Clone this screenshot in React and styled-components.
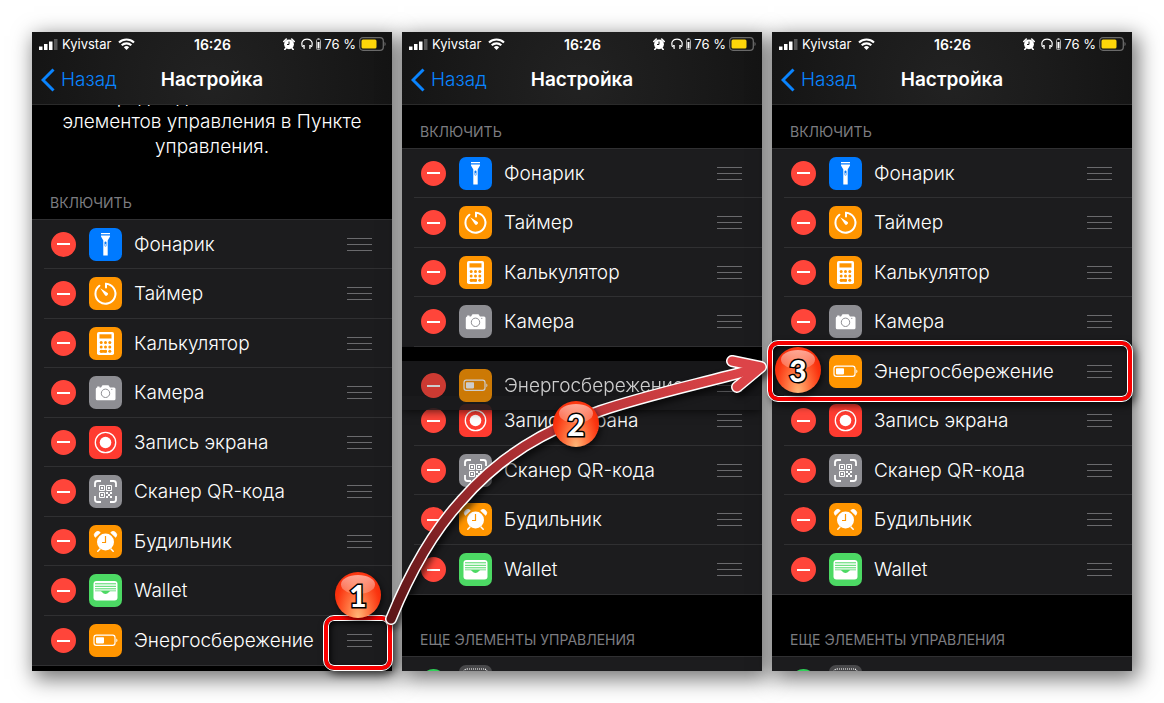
import React from "react";
import styled, { createGlobalStyle, css } from "styled-components";

const GlobalStyle = createGlobalStyle`
  * {
    box-sizing: border-box;
  }
  body {
    margin: 0;
    background: #fff;
    font-family: Inter, "Liberation Sans", sans-serif;
    overflow: hidden;
  }
  h1, h2, p, ul {
    margin: 0;
    padding: 0;
  }
  button {
    border: 0;
    padding: 0;
    background: none;
    cursor: pointer;
  }
`;

// controls that can be added to the control center
const controls = {
  torch: { label: "Фонарик", color: "#007aff" },
  timer: { label: "Таймер", color: "#ff9500" },
  calc: { label: "Калькулятор", color: "#ff9500" },
  camera: { label: "Камера", color: "#8e8e93" },
  record: { label: "Запись экрана", color: "#ff3b30" },
  qr: { label: "Сканер QR-кода", color: "#8e8e93" },
  alarm: { label: "Будильник", color: "#ff9500" },
  wallet: { label: "Wallet", color: "#4cd964" },
  power: { label: "Энергосбережение", color: "#ff9500" },
};

const before = ["torch", "timer", "calc", "camera", "record", "qr", "alarm", "wallet", "power"];
const after = ["torch", "timer", "calc", "camera", "power", "record", "qr", "alarm", "wallet"];

function Glyph({ name }) {
  switch (name) {
    case "torch":
      return (
        <>
          <path d="M12 5h9v1.3h-9zM12 7.4h9v1.2l-2.3 3.8v15h-4.4v-15L12 8.600z" fill="#fff" />
          <rect x="15.500" y="13.500" width="2" height="5" rx="1" fill="#007aff" />
          <circle cx="16.500" cy="17" r=".8" fill="#fff" />
        </>
      );
    case "timer":
      return (
        <>
          <path d="M17 10.500V6.700a10 10 0 1 1-6.600 2" fill="none" stroke="#fff" strokeWidth="2" strokeLinecap="round" />
          <path d="M11.300 11.200l6.600 4.300a1.700 1.700 0 1 1-2.300 2.300z" fill="#fff" />
        </>
      );
    case "calc":
      return (
        <>
          <rect x="8" y="5" width="17" height="23" rx="1.800" fill="#fff" />
          <rect x="10.500" y="7.300" width="12" height="4.200" fill="#ff9500" />
          <g fill="#ff9500">
            {[15.5, 20, 24.3].map((y) =>
              [12.2, 16.5, 20.8].map((x) => <circle key={x + y} cx={x} cy={y} r="1.500" />)
            )}
            <rect x="11" y="23" width="7" height="2.700" rx="1.300" />
          </g>
        </>
      );
    case "camera":
      return (
        <>
          <path
            d="M8.200 11.500v-1h2.300v1h1.500l1.500-2.300h6l1.500 2.300h4a1.500 1.500 0 0 1 1.500 1.500v9.700a1.500 1.500 0 0 1-1.500 1.500H8.300a1.500 1.500 0 0 1-1.500-1.500V13a1.500 1.500 0 0 1 1.400-1.500z"
            fill="#fff"
          />
          <circle cx="16.500" cy="17.300" r="4.200" fill="none" stroke="#8e8e93" strokeWidth="1" />
          <circle cx="22.800" cy="13.300" r=".6" fill="#8e8e93" />
        </>
      );
    case "record":
      return (
        <>
          <circle cx="16.500" cy="16.500" r="10.200" fill="none" stroke="#fff" strokeWidth="1.300" />
          <circle cx="16.500" cy="16.500" r="5.800" fill="#fff" />
        </>
      );
    case "qr":
      return (
        <g fill="none" stroke="#fff">
          <path
            d="M6 12V8.500A2.500 2.500 0 0 1 8.500 6H12M21 6h3.500A2.500 2.500 0 0 1 27 8.500V12M27 21v3.500a2.500 2.500 0 0 1-2.500 2.500H21M12 27H8.500A2.500 2.500 0 0 1 6 24.500V21"
            strokeWidth="1.800"
          />
          <path d="M10.500 10.500h5v5h-5zM17.500 10.500h5v5h-5zM10.500 17.500h5v5h-5z" />
          <path d="M12 13h2M19 13h2M12 20h2M17 18h2M21 18h2M19 20h2M17 22h2M21 22h2" strokeWidth="1.800" />
        </g>
      );
    case "alarm":
      return (
        <>
          <circle cx="16.500" cy="17" r="8.500" fill="#fff" />
          <path
            d="M6.300 12.300a3.400 3.400 0 0 1 5-4.700zM26.700 12.300a3.400 3.400 0 0 0-5-4.700z"
            fill="#fff"
            stroke="#fff"
            strokeWidth=".8"
            strokeLinejoin="round"
          />
          <path d="M11 24l-2.200 2.300M22 24l2.200 2.300" stroke="#fff" strokeWidth="1.500" strokeLinecap="round" />
          <path d="M16.500 11v6.500H13" fill="none" stroke="#ff9500" strokeWidth="1.200" />
        </>
      );
    case "wallet":
      return (
        <>
          <rect x="4.500" y="7" width="24" height="19.500" rx="3" fill="#fff" />
          <path d="M6 9.800h21M6 12.300h21M6 14.800h21" stroke="#4cd964" strokeWidth="1" />
          <path d="M6 16.500h21v.8h-5.500c-1.500 0-2 2.700-5 2.700s-3.500-2.700-5-2.700H6z" fill="#4cd964" />
        </>
      );
    case "power":
      return (
        <>
          <rect x="5" y="11.200" width="21" height="10.200" rx="2.300" fill="none" stroke="#fff" strokeWidth="1.200" />
          <rect x="7" y="13.200" width="8" height="6.200" rx=".8" fill="#fff" />
          <path d="M27.300 14.500c1.500.4 1.500 3.300 0 3.700z" fill="#fff" />
        </>
      );
    default:
      return <rect x="5" y="4" width="23" height="20" rx="3" fill="none" stroke="#fff" strokeWidth="1.200" strokeDasharray="1 1" />;
  }
}

function StatusBar() {
  return (
    <Status>
      <StatusSide>
        <svg width="20" height="12" viewBox="0 0 20 12">
          <path d="M0 8.500h3.500V12H0zM5 6h3.500v6H5zM10 3.500h3.500V12H10z" fill="#fff" />
          <path d="M15 1h3.500v11H15z" fill="#555" />
        </svg>
        <Carrier>Kyivstar</Carrier>
        <svg width="17" height="12" viewBox="0 0 17 12">
          <g fill="none" stroke="#fff" strokeWidth="2.100">
            <path d="M1 4.600a10.800 10.800 0 0 1 15 0" />
            <path d="M3.700 7.300a7 7 0 0 1 9.600 0" />
          </g>
          <path d="M8.500 12L5.800 9.200a4 4 0 0 1 5.400 0z" fill="#fff" />
        </svg>
      </StatusSide>
      <Clock>16:26</Clock>
      <StatusSide $end>
        <svg width="12" height="12" viewBox="0 0 12 12">
          <circle cx="6" cy="6.300" r="4.900" fill="#fff" />
          <path d="M.8 3.500L3.300 1M11.200 3.500L8.700 1M3 10l-1.200 1.500M9 10l1.200 1.500" stroke="#fff" strokeWidth="1.600" strokeLinecap="round" />
          <path d="M6 3.500v3H4" fill="none" stroke="#1a1a1a" />
        </svg>
        <Headphones width="12" height="12" viewBox="0 0 12 12">
          <path d="M1.600 9C-.5 4 2 1.200 6 1.200S12.500 4 10.400 9" fill="none" stroke="#fff" strokeWidth="1.200" />
          <path d="M2 7h1.700v4H2.600zM10 7H8.300v4h1.100z" fill="#fff" />
        </Headphones>
        <svg width="5" height="12" viewBox="0 0 5 12">
          <path d="M1.500 0h2v1.500h-2z" fill="#aaa" />
          <rect x=".5" y="1.500" width="4" height="10" rx=".8" fill="none" stroke="#aaa" />
          <path d="M1.500 4h2v6.500h-2z" fill="#fff" />
        </svg>
        <span>76 %</span>
        <svg width="27" height="14" viewBox="0 0 27 14">
          <rect x=".7" y=".7" width="23.600" height="12.600" rx="3.300" fill="none" stroke="#6a6a6a" strokeWidth="1.300" />
          <rect x="2.500" y="2.500" width="15" height="9" rx="1.500" fill="#ffd60a" />
          <path d="M25.500 5c1.500.4 1.500 3.600 0 4z" fill="#6a6a6a" />
        </svg>
      </StatusSide>
    </Status>
  );
}

function Control({ id, dragging }) {
  const { label, color } = controls[id];
  return (
    <Row as={dragging ? "div" : "li"} $dragging={dragging}>
      <RowBody $dimmed={dragging}>
        <RemoveButton aria-label={`Удалить ${label}`} />
        <Tile viewBox="0 0 33 33" aria-hidden="true">
          <rect width="33" height="33" rx="7" fill={color} />
          <Glyph name={id} />
        </Tile>
        <Label>{label}</Label>
        <Handle aria-label={`Переместить ${label}`}>
          <i />
          <i />
          <i />
        </Handle>
      </RowBody>
    </Row>
  );
}

function Phone({ order, intro, dragged, more }) {
  return (
    <Screen>
      <NavBar>
        <StatusBar />
        <NavRow>
          <Back href="#back">
            <svg width="14" height="24" viewBox="0 0 14 24">
              <path d="M12.500 1.500L2 12l10.500 10.500" fill="none" stroke="#0a84ff" strokeWidth="3" />
            </svg>
            Назад
          </Back>
          <Title>Настройка</Title>
        </NavRow>
      </NavBar>
      {intro && (
        <Intro>
          порядок дополнительных
          <br />
          элементов управления в Пункте
          <br />
          управления.
        </Intro>
      )}
      <SectionTitle>ВКЛЮЧИТЬ</SectionTitle>
      <List>
        {order.map((id) =>
          id === dragged ? (
            <Slot key={id}>
              <Control id={id} dragging />
            </Slot>
          ) : (
            <Control key={id} id={id} />
          )
        )}
      </List>
      {more && (
        <>
          <SectionTitle $spaced>ЕЩЕ ЭЛЕМЕНТЫ УПРАВЛЕНИЯ</SectionTitle>
          <List>
            <Row>
              <RowBody>
                <RemoveButton $add aria-label="Добавить" />
                <Tile viewBox="0 0 33 33" aria-hidden="true">
                  <rect width="33" height="33" rx="7" fill="#48484a" />
                  <Glyph name="more" />
                </Tile>
              </RowBody>
            </Row>
          </List>
        </>
      )}
    </Screen>
  );
}

export default function App() {
  return (
    <Stage>
      <GlobalStyle />
      <Phone order={before} intro />
      <Phone order={after} dragged="power" more />
      <Phone order={after} more />

      <HandleFrame />
      <RowFrame />
      <Arrow viewBox="0 0 1164 703" aria-hidden="true">
        <defs>
          <linearGradient id="shaft" gradientUnits="userSpaceOnUse" x1="391" y1="620" x2="740" y2="367">
            <stop offset="0" stopColor="#5c1618" />
            <stop offset=".4" stopColor="#a52c2f" />
            <stop offset="1" stopColor="#dc4448" />
          </linearGradient>
        </defs>
        <g fill="none" strokeLinecap="round" strokeLinejoin="round">
          <g stroke="#fff" strokeWidth="12">
            <path d={SHAFT} />
            <path d={HEAD} />
          </g>
          <g stroke="url(#shaft)" strokeWidth="9">
            <path d={SHAFT} />
            <path d={HEAD} />
          </g>
        </g>
      </Arrow>
      <Step $x={358} $y={595}>1</Step>
      <Step $x={576} $y={424}>2</Step>
      <Step $x={798} $y={370}>3</Step>
    </Stage>
  );
}

const SHAFT = "M391 619C408 577 430 535 461 501C500 456 545 430 600 411C650 394 700 384 754 369";
const HEAD = "M732 361L761 367L737 387";

const Stage = styled.main`
  position: relative;
  display: flex;
  gap: 10px;
  padding: 32px;
`;
const Screen = styled.section`
  flex: 1;
  min-width: 0;
  height: 639px;
  overflow: hidden;
  isolation: isolate;
  background: #000;
  color: #fff;
  box-shadow: 4px 6px 20px 2px rgba(0, 0, 0, 0.55);
`;
const NavBar = styled.header`
  position: relative;
  z-index: 1;
  height: 73px;
  border-bottom: 1px solid #2a2a2a;
  background: radial-gradient(circle at 50% 70%, #222 0, #1c1c1c 45%, #141414 100%);
`;
const Status = styled.div`
  display: grid;
  grid-template-columns: 1fr auto 1fr;
  align-items: center;
  height: 24px;
  padding: 0 6px 0 7px;
  font-size: 13px;
`;
const StatusSide = styled.div`
  display: flex;
  align-items: center;
  gap: 3px;
  white-space: nowrap;
  justify-content: ${(p) => (p.$end ? "flex-end" : "flex-start")};
`;
const Carrier = styled.span`
  margin-right: 4px;
`;
const Headphones = styled.svg`
  margin-left: 3px;
`;
const Clock = styled.time`
  font-size: 14px;
  font-weight: 600;
`;
const NavRow = styled.div`
  display: grid;
  grid-template-columns: 1fr auto 1fr;
  align-items: center;
  height: 47px;
  padding: 0 9px;
  font-size: 19px;
`;
const Back = styled.a`
  display: flex;
  align-items: center;
  gap: 6px;
  color: #0a84ff;
  font-weight: 300;
  text-decoration: none;
`;
const Title = styled.h1`
  font-size: 19px;
  font-weight: 600;
`;
/* scrolled, so its first line is tucked under the nav bar */
const Intro = styled.p`
  && {
    margin-top: -21px;
  }
  height: 92px;
  font-size: 19px;
  font-weight: 300;
  line-height: 25px;
  text-align: center;
  white-space: nowrap;
`;
const SectionTitle = styled.h2`
  height: ${(p) => (p.$spaced ? 61 : 43)}px;
  display: flex;
  align-items: flex-end;
  padding: 0 18px 6px;
  font-size: 14px;
  font-weight: 400;
  line-height: 20px;
  color: #7c7c80;
`;
const List = styled.ul`
  list-style: none;
  background: #1c1c1e;
  border-top: 1px solid #303032;
  border-bottom: 1px solid #303032;
`;
const Row = styled.li`
  display: flex;
  height: 49px;
  padding-left: 12px;
  background: #1c1c1e;
  &:nth-child(even) {
    height: 50px;
  }
  &:last-child > div {
    border-bottom: 0;
  }
  ${(p) =>
    p.$dragging &&
    css`
      position: absolute;
      z-index: 2;
      top: 14px;
      left: 0;
      right: 0;
      background: rgba(26, 26, 28, 0.88);
      box-shadow: 0 0 10px rgba(0, 0, 0, 0.8);
    `}
`;
const Slot = styled.li`
  position: relative;
  height: 49px;
  background: #000;
`;
const RowBody = styled.div`
  flex: 1;
  display: flex;
  align-items: center;
  padding: 0 20px 0 7px;
  border-bottom: 1px solid #303032;
  > * {
    opacity: ${(p) => (p.$dimmed ? 0.78 : 1)};
  }
`;
const RemoveButton = styled.button`
  flex: none;
  display: grid;
  place-items: center;
  width: 25px;
  height: 25px;
  border-radius: 50%;
  background: ${(p) => (p.$add ? "#30d158" : "#ff453a")};
  &::before {
    content: "";
    width: 13px;
    height: 2px;
    background: #fff;
  }
`;
const Tile = styled.svg`
  flex: none;
  width: 33px;
  height: 33px;
  margin-left: 13px;
`;
const Label = styled.span`
  flex: 1;
  min-width: 0;
  margin-left: 12px;
  font-size: 19px;
  font-weight: 300;
  white-space: nowrap;
`;
const Handle = styled.button`
  flex: none;
  display: grid;
  gap: 5px;
  width: 25px;
  i {
    height: 1px;
    background: #6a6a6d;
  }
`;
const Frame = styled.div`
  position: absolute;
  border: 4px solid #f80000;
  border-radius: 10px;
  outline: 1px solid #fff;
  box-shadow: inset 0 0 0 1px #fff, inset 2px 2px 6px #000, 3px 4px 8px rgba(0, 0, 0, 0.7);
`;
const HandleFrame = styled(Frame)`
  left: 324px;
  top: 616px;
  width: 68px;
  height: 54px;
`;
const RowFrame = styled(Frame)`
  left: 768px;
  right: 32px;
  top: 341px;
  height: 60px;
`;
const Arrow = styled.svg`
  position: absolute;
  left: 0;
  top: 0;
  width: 100%;
  pointer-events: none;
  filter: drop-shadow(3px 4px 3px rgba(0, 0, 0, 0.6));
`;
const Step = styled.strong`
  position: absolute;
  isolation: isolate;
  left: ${(p) => p.$x - 23}px;
  top: ${(p) => p.$y - 23}px;
  width: 46px;
  height: 46px;
  border-radius: 50%;
  background: radial-gradient(ellipse at 50% 100%, #ffb878 0, #ff7440 35%, #fb3510 70%, #ea2000 100%);
  color: #fff;
  font-family: Lato, sans-serif;
  font-size: 30px;
  font-weight: 900;
  line-height: 46px;
  text-align: center;
  -webkit-text-stroke: 3px #000;
  paint-order: stroke fill;
  box-shadow: 2px 3px 6px rgba(0, 0, 0, 0.6);
  &::before {
    content: "";
    position: absolute;
    left: 6px;
    top: 3px;
    width: 34px;
    height: 19px;
    border-radius: 50%;
    background: linear-gradient(rgba(255, 255, 255, 0.55), rgba(255, 255, 255, 0.2));
    z-index: -1;
  }
`;
